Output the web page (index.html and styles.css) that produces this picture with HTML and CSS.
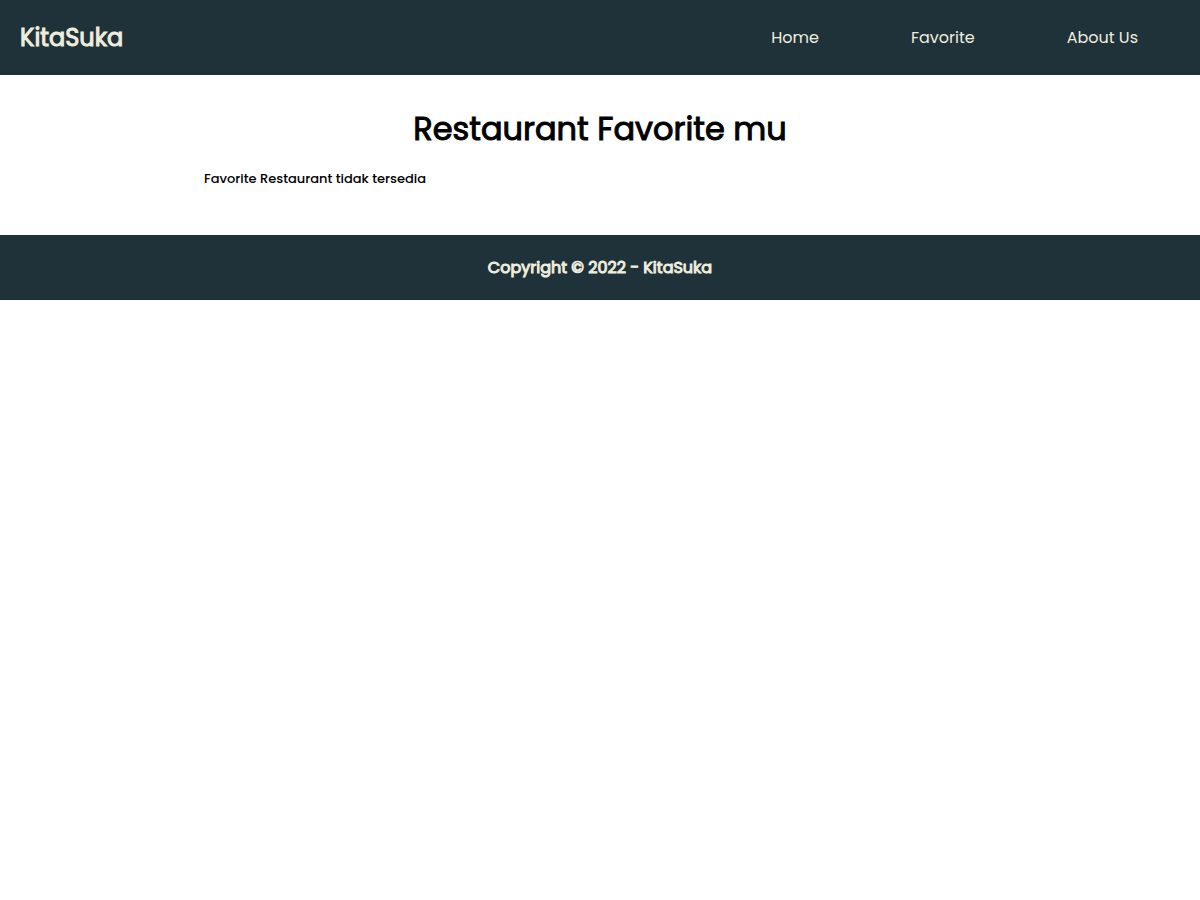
FILE: index.html
```html
<!DOCTYPE html>
<html lang="id">
<head>
<meta charset="utf-8">
<meta name="viewport" content="width=device-width, initial-scale=1">
<title>KitaSuka</title>
<link rel="stylesheet" href="styles.css">
</head>
<body>
<header class="header">
  <h1 class="brand">KitaSuka</h1>
  <nav>
    <ul class="menu">
      <li><a class="menu-link" href="#home">Home</a></li>
      <li><a class="menu-link" href="#favorite">Favorite</a></li>
      <li><a class="menu-link" href="#about">About Us</a></li>
    </ul>
  </nav>
</header>
<main class="content">
  <h2 class="title">Restaurant Favorite mu</h2>
  <div class="restaurants">
    <p class="empty">Favorite Restaurant tidak tersedia</p>
  </div>
</main>
<footer class="footer">
  <p class="copyright">Copyright © 2022 - KitaSuka</p>
</footer>
</body>
</html>
```

FILE: styles.css
```css
* {
  box-sizing: border-box;
  margin: 0;
  padding: 0;
}

body {
  background: #fff;
  color: #000;
  font-family: Poppins, Inter, sans-serif;
  font-size: 16px;
  line-height: 24px;
}

.header {
  display: flex;
  align-items: center;
  justify-content: space-between;
  min-height: 75px;
  padding: 0 16px 0 20px;
  background: #203239;
}

.brand {
  color: #eeedde;
  font-size: 24px;
  font-weight: 400;
  line-height: 36px;
  -webkit-text-stroke: 1px;
}

.menu {
  display: flex;
  list-style: none;
}

.menu-link {
  display: block;
  padding: 12px 46px;
  color: #eeedde;
  text-decoration: none;
}

.content {
  padding: 30px 0 44px;
}

.title {
  font-size: 32px;
  font-weight: 400;
  line-height: 48px;
  text-align: center;
  -webkit-text-stroke: 1px;
}

.restaurants {
  width: 66%;
  margin: 14px auto 0;
}

.empty {
  font-size: 13px;
  font-weight: 500;
}

.footer {
  padding: 21px 16px 20px;
  background: #203239;
  color: #eeedde;
  text-align: center;
}

.copyright {
  font-weight: 400;
  -webkit-text-stroke: 1px;
}
```
